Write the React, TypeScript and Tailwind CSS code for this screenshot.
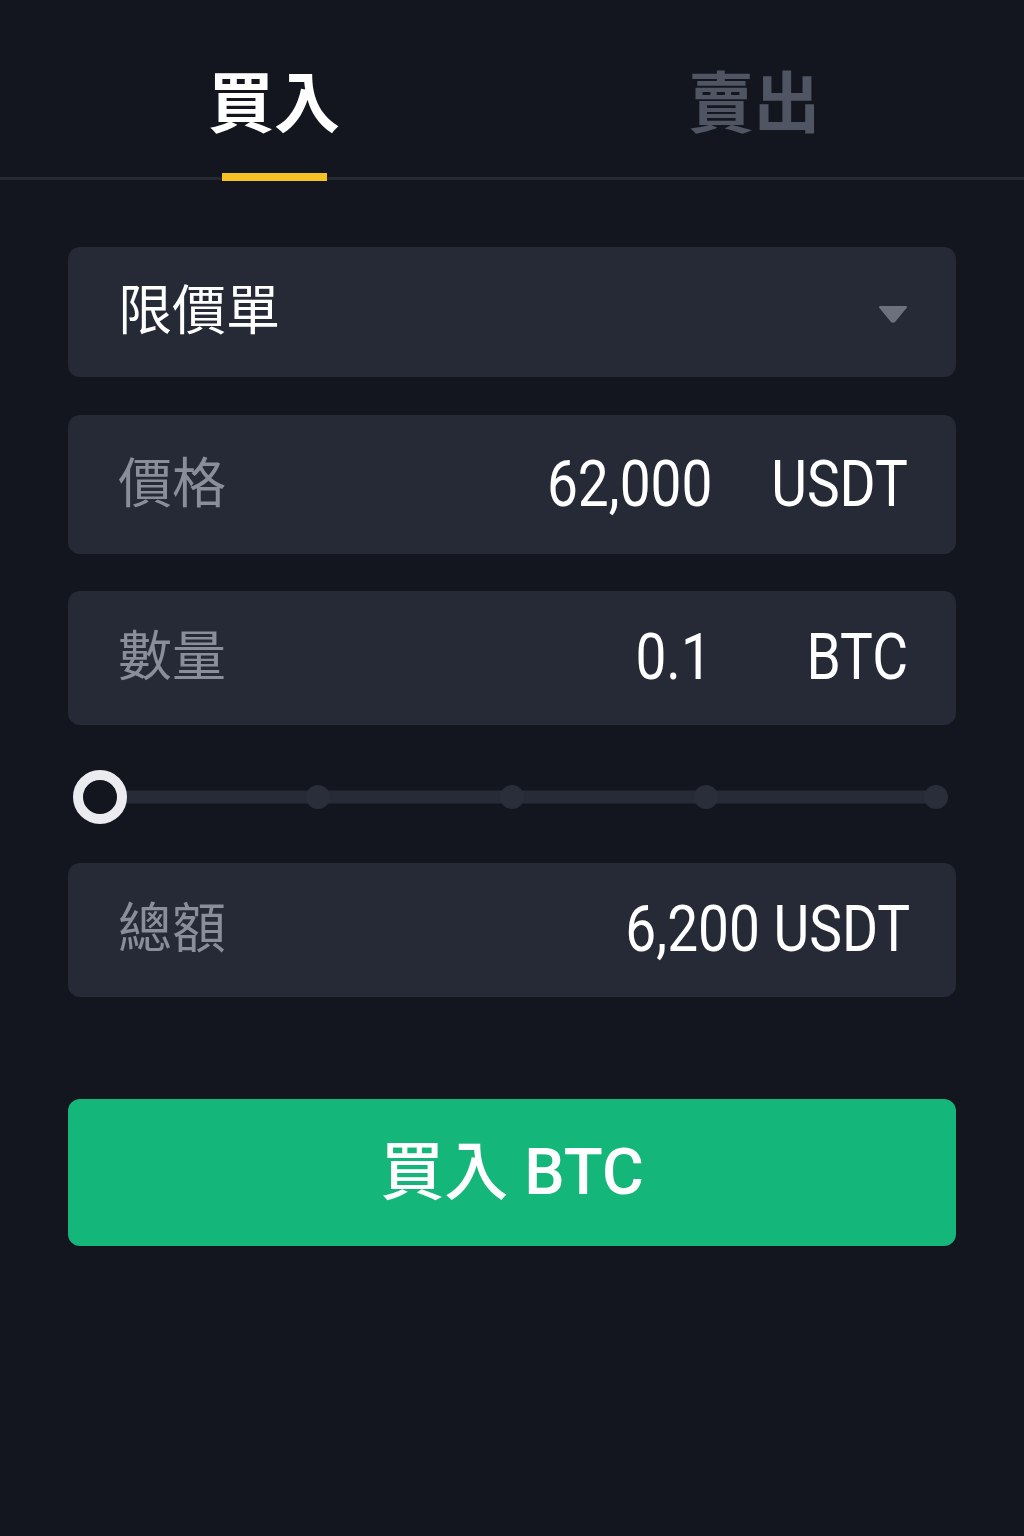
import React from "react";

function Num({ children }: { children: React.ReactNode }) {
  return (
    <span className="inline-block origin-right scale-x-[0.86] whitespace-nowrap">
      {children}
    </span>
  );
}

function Field({ label, value, unit }: { label: string; value: string; unit?: string }) {
  return (
    <div className="flex items-center rounded-[12px] bg-[#262a37] pl-[50px] pr-[48px] h-full">
      <span className="text-[54px] leading-none text-[#8a8e99]">{label}</span>
      <div className="ml-auto flex items-center text-[64px] leading-none text-white">
        <span className="text-right">
          <Num>{value}</Num>
        </span>
        {unit && (
          <span className="w-[196px] text-right">
            <Num>{unit}</Num>
          </span>
        )}
      </div>
    </div>
  );
}

export default function App() {
  return (
    <div className="min-h-[1536px] w-full bg-[#13161f] font-['Roboto','Noto_Sans_CJK_TC',sans-serif]">
      {/* Tabs */}
      <div className="flex h-[180px] border-b-[3px] border-[#252934]">
        <div className="flex w-[552px] flex-col items-center">
          <div className="mr-[4px] pt-[72px] text-[66px] font-bold leading-none text-white">買入</div>
          <div className="mt-auto mr-[4px] h-[8px] w-[105px] translate-y-[4px] bg-[#f5c123]" />
        </div>
        <div className="flex flex-1 flex-col items-center">
          <div className="mr-[68px] pt-[72px] text-[66px] font-bold leading-none text-[#4f5563]">賣出</div>
        </div>
      </div>

      <div className="mx-[68px] mt-[67px] flex flex-col">
        {/* Order type select */}
        <div className="flex h-[130px] items-center justify-between rounded-[12px] bg-[#262a37] pl-[50px] pr-[48px]">
          <span className="text-[54px] leading-none text-white">限價單</span>
          <svg width="30" height="18" viewBox="0 0 30 18" className="mt-[4px]">
            <path d="M2 2 H28 L16.5 16 Q15 17.5 13.5 16 Z" fill="#6b717d" stroke="#6b717d" strokeWidth="2" strokeLinejoin="round" />
          </svg>
        </div>

        <div className="mt-[38px] h-[139px]">
          <Field label="價格" value="62,000" unit="USDT" />
        </div>

        <div className="mt-[37px] h-[134px]">
          <Field label="數量" value="0.1" unit="BTC" />
        </div>

        {/* Slider */}
        <div className="relative mt-[45px] h-[54px]">
          <div className="absolute left-[32px] right-[8px] top-1/2 h-[13px] -translate-y-1/2 rounded-full bg-[#272b37]" />
          <div className="absolute left-[238px] top-1/2 h-[24px] w-[24px] -translate-y-1/2 rounded-full bg-[#2a2e3b]" />
          <div className="absolute left-[432px] top-1/2 h-[24px] w-[24px] -translate-y-1/2 rounded-full bg-[#2a2e3b]" />
          <div className="absolute left-[626px] top-1/2 h-[24px] w-[24px] -translate-y-1/2 rounded-full bg-[#2a2e3b]" />
          <div className="absolute left-[856px] top-1/2 h-[24px] w-[24px] -translate-y-1/2 rounded-full bg-[#2a2e3b]" />
          <div className="absolute left-[5px] top-0 h-[54px] w-[54px] rounded-full border-[10px] border-[#ececf0] bg-[#13161f]" />
        </div>

        <div className="mt-[39px] flex h-[134px] items-center rounded-[12px] bg-[#262a37] pl-[50px] pr-[46px]">
          <span className="text-[54px] leading-none text-[#8a8e99]">總額</span>
          <span className="ml-auto text-[64px] leading-none text-white">
            <Num>6,200 USDT</Num>
          </span>
        </div>

        <button className="mt-[102px] flex h-[147px] items-center justify-center rounded-[12px] bg-[#15b67a] text-[64px] font-medium leading-none text-white">
          買入 BTC
        </button>
      </div>
    </div>
  );
}
